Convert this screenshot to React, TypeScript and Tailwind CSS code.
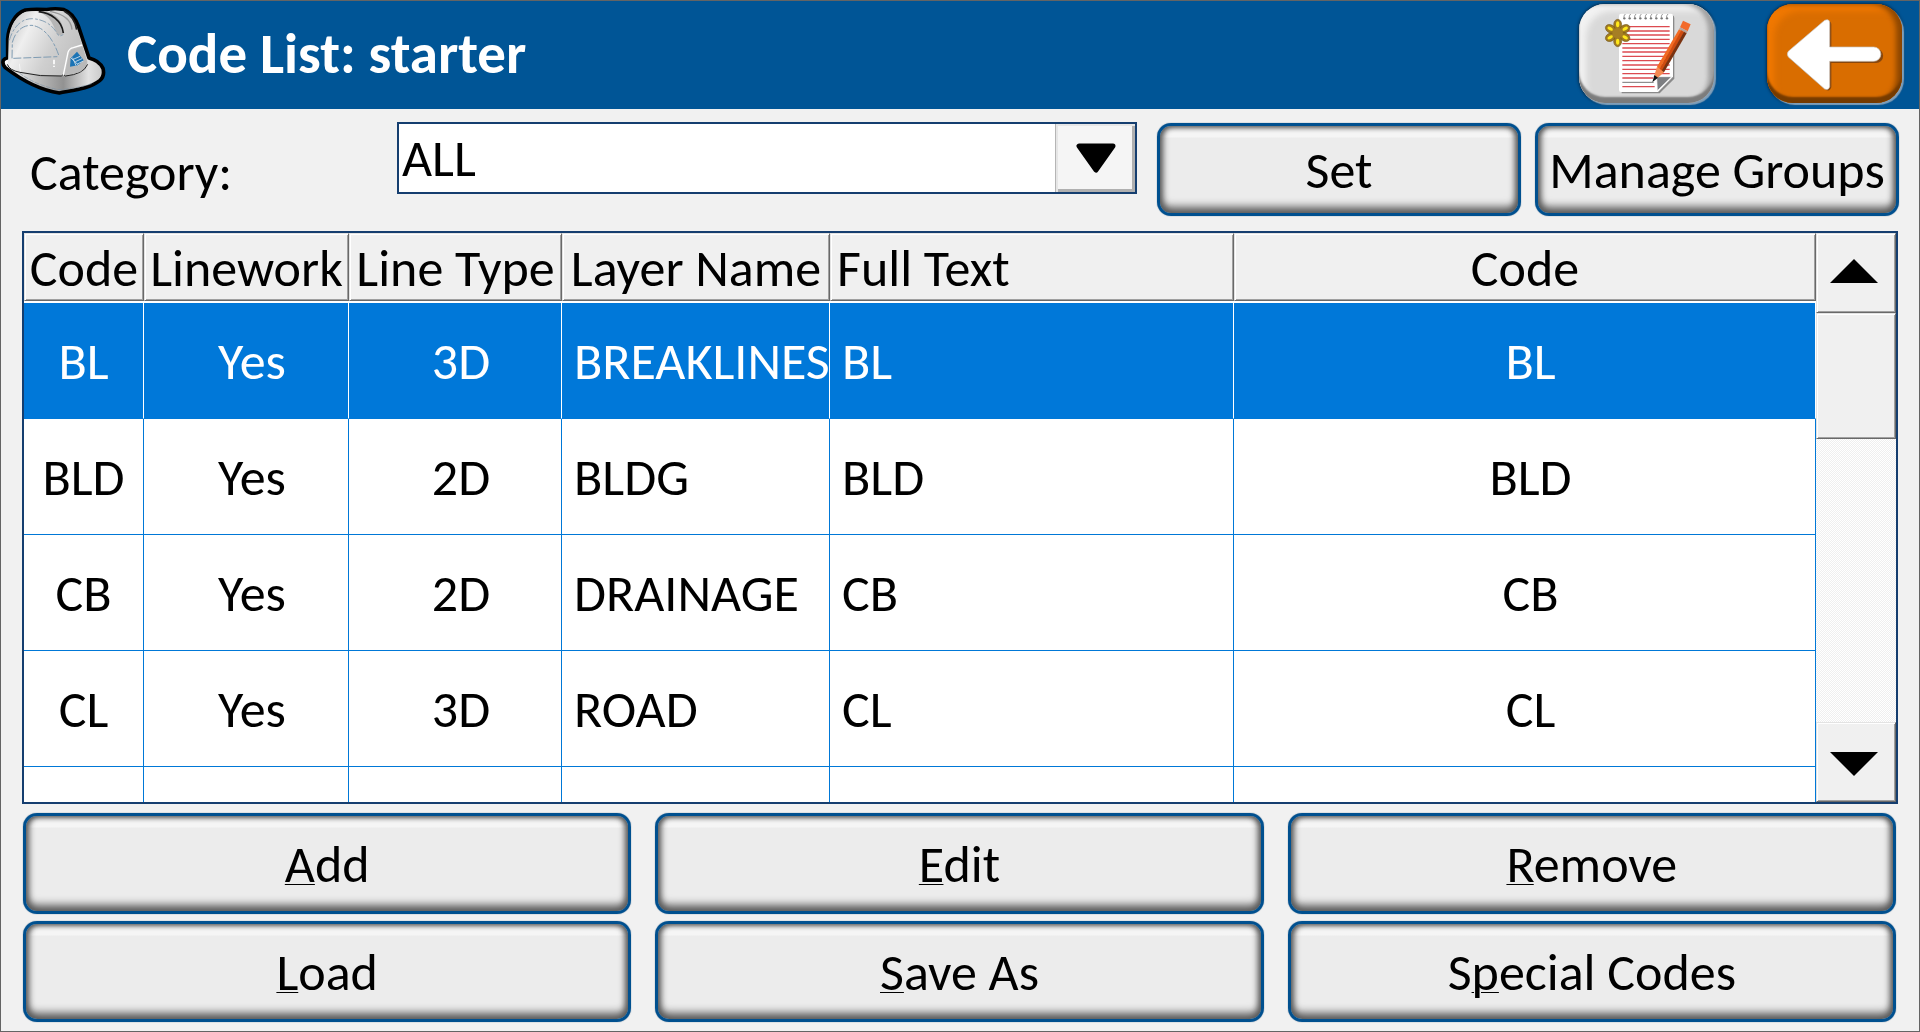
import React from "react";

const headers = ["Code", "Linework", "Line Type", "Layer Name", "Full Text", "Code"];

const rows = [
  ["BL", "Yes", "3D", "BREAKLINES", "BL", "BL"],
  ["BLD", "Yes", "2D", "BLDG", "BLD", "BLD"],
  ["CB", "Yes", "2D", "DRAINAGE", "CB", "CB"],
  ["CL", "Yes", "3D", "ROAD", "CL", "CL"],
  ["", "", "", "", "", ""],
];

const columnWidths = ["w-[120px]", "w-[205px]", "w-[213px]", "w-[268px]", "w-[404px]", ""];

const cellAlign = [
  "text-center",
  "pl-3 text-center",
  "pl-3 text-center",
  "pl-3 text-left",
  "pl-3 text-left",
  "pl-3 text-center",
];

// [text before the access key, access key, text after it]
const actions = [
  ["", "A", "dd"],
  ["", "E", "dit"],
  ["", "R", "emove"],
  ["", "L", "oad"],
  ["", "S", "ave As"],
  ["S", "p", "ecial Codes"],
];

const panelButton =
  "flex min-w-0 items-center justify-center whitespace-nowrap rounded-[14px] border-[3px] border-[#00508f] bg-[linear-gradient(#f5f5f5_0px,#f5f5f5_11px,#ececec_12px)] text-black shadow-[inset_0_-9px_9px_-3px_#5a5a5a,inset_7px_0_6px_-4px_#5c5c5c,inset_-7px_0_6px_-4px_#5c5c5c,inset_0_4px_5px_-2px_#606060,0_0_1px_#305070]";

const raised =
  "border border-t-[#e3e3e3] border-l-[#e3e3e3] border-b-[#696969] border-r-[#696969] bg-[#f0f0f0] shadow-[inset_1px_1px_0_#fff,inset_-1px_-1px_0_#a0a0a0]";

function HardHat() {
  return (
    <svg viewBox="3 3 324 324" className="size-[108px] shrink-0" aria-hidden="true">
      <defs>
        <linearGradient id="shell" x1="0" y1="0.2" x2="1" y2="0.6">
          <stop offset="0" stopColor="#c4c4c4" />
          <stop offset="0.25" stopColor="#efefef" />
          <stop offset="0.6" stopColor="#cfcfcf" />
          <stop offset="1" stopColor="#bdbdbd" />
        </linearGradient>
        <linearGradient id="brim" x1="0" y1="0" x2="1" y2="0">
          <stop offset="0" stopColor="#ffffff" />
          <stop offset="0.35" stopColor="#bcbcbc" />
          <stop offset="0.6" stopColor="#929292" />
          <stop offset="0.85" stopColor="#e2e2e2" />
          <stop offset="1" stopColor="#c8c8c8" />
        </linearGradient>
      </defs>
      <path
        d="M10 184 Q14 178 23 176 L23 120 C26 80 44 44 76 33 Q104 29 140 32 Q165 27 192 32 C216 40 228 62 236 84 L267 177 Q297 184 309 208 Q315 232 299 245 C268 269 224 273 178 282 C124 274 68 246 16 206 Q6 196 10 184 Z"
        fill="url(#brim)"
        stroke="#000"
        strokeWidth="11"
        strokeLinejoin="round"
      />
      <path
        d="M24 196 L26 120 C30 82 48 50 76 39 Q106 34 140 37 Q165 32 190 37 C212 46 222 66 230 88 L262 188 Q262 214 240 222 Q216 232 188 230 Q100 230 52 214 Q28 206 24 196 Z"
        fill="url(#shell)"
      />
      <path d="M22 196 Q28 214 60 220 Q120 234 184 231 L190 226 L196 231 Q250 226 263 196" fill="none" stroke="#222" strokeWidth="3" />
      <path d="M108 38 C140 42 158 66 170 104 Q176 114 190 104 C192 74 176 48 140 37 Z" fill="#b6b6b6" />
      <path d="M116 38 C152 42 186 64 190 102" fill="none" stroke="#1a1a1a" strokeWidth="5" />
      <path d="M150 37 C186 44 214 62 216 92" fill="none" stroke="#999" strokeWidth="4" />
      <path d="M192 36 C214 48 226 66 230 92" fill="none" stroke="#222" strokeWidth="5" />
      <path d="M28 124 C40 82 66 58 98 59 C136 62 158 80 172 104 Q178 116 190 106" fill="none" stroke="#8ba3b6" strokeWidth="3" strokeDasharray="22 6 8 5" />
      <path d="M36 178 L37 130 C46 98 66 78 96 79 C130 84 158 116 176 168" fill="none" stroke="#7f9cb3" strokeWidth="3" strokeDasharray="26 6 10 5" />
      <path d="M40 178 L172 173" stroke="#7f9cb3" strokeWidth="3" strokeDasharray="24 6" />
      <path d="M58 194 L61 218" stroke="#f5f5f5" strokeWidth="3" />
      <path d="M162 182 L162 196 M162 200 L162 204" stroke="#fff" strokeWidth="5" />
      <path d="M190 228 L204 160 Q208 148 220 146 L246 138" fill="none" stroke="#fff" strokeWidth="4" />
      <path d="M194 228 L208 162 Q212 152 222 150 L248 144 L260 190 Q256 216 230 222 Z" fill="#b9b9b9" />
      <path d="M210 203 L212 178 L231 158 L251 184 L234 199 Z" fill="#1a73b5" />
      <path d="M212 176 L236 199 M222 180 L240 172 M226 188 L246 179 M232 195 L250 186 M218 176 L228 200" stroke="#d7e4ee" strokeWidth="2.5" />
      <path d="M58 222 Q110 260 176 272 Q236 268 280 252" fill="none" stroke="#8094a5" strokeWidth="2" strokeDasharray="14 4" />
    </svg>
  );
}

function NoteIcon() {
  const ruled = [80, 93, 105, 118, 131, 144, 156, 169, 182, 195, 208, 221];
  const rings = [165, 181, 197, 213, 229, 245, 261, 277, 293];
  const petals = [0, 60, 120, 180, 240, 300];
  return (
    <svg viewBox="28 12 405 297" className="h-[99px] w-[135px]" aria-hidden="true">
      <path d="M153 46 H308 Q314 46 314 54 V236 L270 280 H156 Z" fill="#8a8a8a" />
      <path d="M154 41 H304 Q310 41 310 48 V230 L265 276 H154 Q148 276 148 270 V48 Q148 41 154 41 Z" fill="#fff" />
      {rings.map((x) => (
        <g key={x}>
          <path d={`M${x + 2} 42 Q${x - 4} 48 ${x - 2} 53`} fill="none" stroke="#9a9a9a" strokeWidth="3" />
          <circle cx={x - 1} cy="55" r="3.5" fill="#777" />
        </g>
      ))}
      {ruled.map((y) => (
        <path key={y} d={`M158 ${y} H300`} stroke="#dc4a50" strokeWidth="4" />
      ))}
      <path d="M158 234 H250 M158 260 H255" stroke="#dc4a50" strokeWidth="4" />
      <path d="M158 247 H252" stroke="#777" strokeWidth="3" />
      <path d="M261 230 H306 L263 272 Z" fill="#7d7f82" stroke="#fff" strokeWidth="2" />
      <g stroke="#6b4d10" strokeWidth="1.5">
        {petals.map((a) => (
          <ellipse key={a} cx="144" cy="74" rx="12" ry="16" fill="#a07a20" transform={`rotate(${a} 144 99)`} />
        ))}
      </g>
      <circle cx="144" cy="99" r="16" fill="#a67e24" />
      {petals.map((a) => (
        <ellipse key={a} cx="144" cy="73" rx="5" ry="9" fill="#ffe81a" transform={`rotate(${a} 144 99)`} />
      ))}
      <path d="M340 62 L363 73 L354 94 L331 82 Z" fill="#f26a2a" />
      <path d="M331 82 L354 94 L351 100 L328 88 Z" fill="#b9a49a" />
      <path d="M328 88 L336 92 L268 210 L262 200 Z" fill="#f26a22" />
      <path d="M335 91 L344 96 L276 216 L266 212 Z" fill="#cf4c10" />
      <path d="M343 95 L351 100 L283 217 L274 216 Z" fill="#7a3210" />
      <path d="M262 200 L283 217 L264 234 L254 226 Z" fill="#f58a52" />
      <path d="M254 225 L265 233 L248 247 Z" fill="#111" />
    </svg>
  );
}

function BackIcon() {
  return (
    <svg viewBox="7 12 405 297" className="h-[99px] w-[135px]" aria-hidden="true">
      <path
        d="M73 158 L184 66 Q199 60 200 73 L200 146 L334 146 A21 21 0 0 1 334 189 L200 189 L200 262 Q196 275 184 270 L74 174 Z"
        fill="#6b3a10"
        opacity="0.75"
      />
      <path
        d="M71 154 L180 61 Q194 55 195 68 L195 141 L327 141 A21 21 0 0 1 327 184 L195 184 L195 260 Q192 272 180 267 L71 171 Q65 162 71 154 Z"
        fill="#fff"
        stroke="#c9c4be"
        strokeWidth="2"
      />
    </svg>
  );
}

export default function App() {
  return (
    <main className="flex h-screen flex-col overflow-hidden border border-[#646464] bg-[#f1f1f1] font-[Carlito,Lato,sans-serif] text-[52px] leading-[60px] text-black">
      <header className="flex h-[108px] shrink-0 items-center bg-[#005596] pr-[17px] pb-[3px]">
        <HardHat />
        <h1 className="ml-[18px] flex-1 truncate text-[57px] leading-[68px] font-bold text-white">Code List: starter</h1>
        <div className="flex gap-[53px]">
          <button
            aria-label="New note"
            className="rounded-[26px] bg-[#d9d9d9] shadow-[inset_0_-6px_2px_#7c7c7c,inset_-6px_0_4px_#a2a2a2,inset_7px_7px_6px_#f2f2f2,2px_2px_1px_#7f9fba,0_0_3px_1px_#052c4c]"
          >
            <NoteIcon />
          </button>
          <button
            aria-label="Back"
            className="rounded-[26px] bg-[#d96d00] shadow-[inset_0_-6px_2px_#753b00,inset_-6px_0_5px_#8f4800,inset_7px_7px_6px_#f07800,2px_2px_1px_#7f9fba,0_0_3px_1px_#052c4c]"
          >
            <BackIcon />
          </button>
        </div>
      </header>

      <div className="flex min-h-0 flex-1 flex-col pt-[13px] pb-[9px]">
        <div className="flex shrink-0 items-start pr-5 pl-[29px]">
          <label htmlFor="category" className="w-[367px] shrink-0 pt-5">
            Category:
          </label>
          <div className="relative h-[72px] min-w-0 flex-1">
            <select
              id="category"
              className="h-full w-full appearance-none rounded-none border-2 border-[#153e6f] bg-white pr-20 pl-[3px] text-black"
            >
              <option>ALL</option>
            </select>
            <span className="pointer-events-none absolute inset-y-[2px] right-[2px] flex w-20 items-center justify-center border-l border-[#b5b5b5] bg-[#f5f5f5] shadow-[inset_2px_2px_0_#e6e6e6,inset_-3px_-3px_0_#b0b0b0]">
              <svg viewBox="0 0 42 30" className="h-[30px] w-[42px]" aria-hidden="true">
                <path d="M4 3 H38 L21 27 Z" fill="#000" stroke="#000" strokeWidth="5" strokeLinejoin="round" />
              </svg>
            </span>
          </div>
          <button className={`${panelButton} mt-px ml-5 h-[93px] w-[364px] shrink-0`}>Set</button>
          <button className={`${panelButton} mt-px ml-[14px] h-[93px] w-[364px] shrink-0`}>Manage Groups</button>
        </div>

        <div className="mx-[21px] mt-[15px] flex min-h-0 flex-1 border-2 border-[#153e6f] bg-white">
          <div className="min-w-0 flex-1 overflow-hidden">
            <table className="w-full table-fixed border-separate border-spacing-0">
              <thead>
                <tr>
                  {headers.map((name, i) => (
                    <th key={i} className={`${columnWidths[i]} p-0 pb-[2px] font-normal`}>
                      <div
                        className={`${raised} h-[68px] overflow-hidden pt-1 whitespace-nowrap ${i === 4 ? "pl-[6px] text-left" : "text-center"}`}
                      >
                        {name}
                      </div>
                    </th>
                  ))}
                </tr>
              </thead>
              <tbody>
                {rows.map((row, r) => (
                  <tr key={r} className={r === 0 ? "bg-[#0078d9] text-white" : "bg-white"}>
                    {row.map((value, c) => (
                      <td
                        key={c}
                        className={`h-[116px] overflow-hidden border-r border-b border-b-[#0078d7] p-0 whitespace-nowrap ${r === 0 ? "border-r-white" : "border-r-[#0078d7]"} ${cellAlign[c]}`}
                      >
                        {value}
                      </td>
                    ))}
                  </tr>
                ))}
              </tbody>
            </table>
          </div>
          <div className="flex w-20 shrink-0 flex-col bg-[repeating-conic-gradient(#ffffff_0_25%,#efefef_0_50%)] bg-[length:2px_2px]">
            <button aria-label="Scroll up" className={`${raised} flex h-20 items-center justify-center pr-1 pb-1`}>
              <svg viewBox="0 0 48 24" className="h-6 w-12" aria-hidden="true">
                <path d="M0 24 L24 0 L48 24 Z" />
              </svg>
            </button>
            <div className={`${raised} h-[126px]`} />
            <div className="flex-1" />
            <button aria-label="Scroll down" className={`${raised} flex h-20 items-center justify-center pt-1 pr-1`}>
              <svg viewBox="0 0 48 24" className="h-6 w-12" aria-hidden="true">
                <path d="M0 0 H48 L24 24 Z" />
              </svg>
            </button>
          </div>
        </div>

        <div className="mt-[9px] grid shrink-0 auto-rows-[101px] grid-cols-3 gap-x-6 gap-y-[7px] pr-[23px] pl-[22px]">
          {actions.map(([before, key, after]) => (
            <button key={before + key + after} className={panelButton}>
              <span>
                {before}
                <span className="underline decoration-1 underline-offset-2">{key}</span>
                {after}
              </span>
            </button>
          ))}
        </div>
      </div>
    </main>
  );
}
